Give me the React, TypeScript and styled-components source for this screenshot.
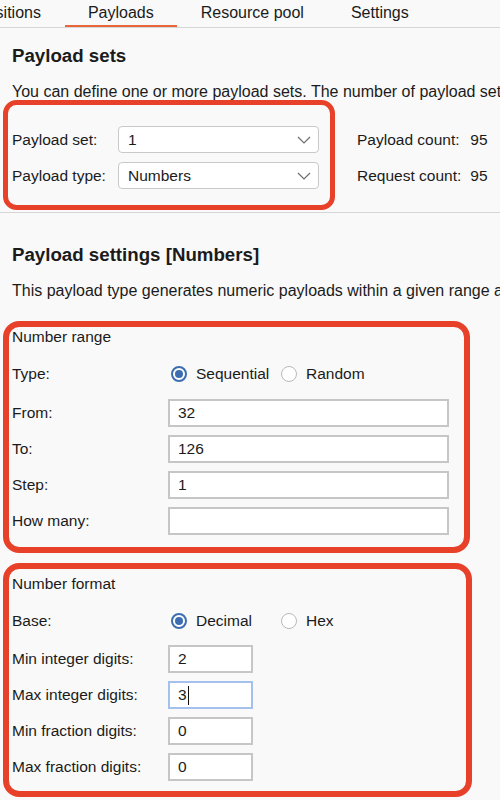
import React from "react";
import styled, { createGlobalStyle } from "styled-components";

const Global = createGlobalStyle`
  html, body { margin: 0; padding: 0; background: #f9f9f9; }
  body {
    font-family: "Liberation Sans", Arial, sans-serif;
    font-size: 15.5px;
    color: #1b1b1b;
    overflow: hidden;
  }
  * { box-sizing: border-box; }
`;

const Page = styled.div`
  width: 500px;
  height: 800px;
  overflow: hidden;
  background: #f9f9f9;
`;

const TabBar = styled.div`
  display: flex;
  gap: 1px;
  height: 28px;
  border-bottom: 1px solid #d6d6d6;
  margin-left: -47px;
  white-space: nowrap;
`;

const Tab = styled.div<{ $active?: boolean }>`
  height: 27px;
  line-height: 25px;
  padding: 0 23px;
  font-size: 16px;
  border-bottom: 2px solid ${(p) => (p.$active ? "#e8673a" : "transparent")};
`;

const Heading = styled.h2<{ $top: number }>`
  margin: ${(p) => p.$top}px 0 0 12px;
  font-size: 18.7px;
  font-weight: bold;
  line-height: 20px;
  white-space: nowrap;
`;

const Desc = styled.p<{ $top: number }>`
  margin: ${(p) => p.$top}px 0 0 12px;
  font-size: 16px;
  line-height: 16px;
  white-space: nowrap;
`;

const SetsRow = styled.div`
  display: flex;
  align-items: flex-start;
  gap: 22px;
`;

const Marked = styled.div<{ $w: number; $h: number; $border: number; $top: number; $pad: string }>`
  margin: ${(p) => p.$top}px 0 0 3px;
  width: ${(p) => p.$w}px;
  height: ${(p) => p.$h}px;
  border: ${(p) => p.$border}px solid #e8412a;
  border-radius: ${(p) => p.$border * 2.7}px;
  padding: ${(p) => p.$pad};
`;

const SelectGrid = styled.div`
  display: grid;
  grid-template-columns: 106px 201px;
  row-gap: 9px;
  align-items: center;
`;

const Select = styled.div`
  height: 27px;
  background: #fff;
  border: 1px solid #c9c9c9;
  border-radius: 4px;
  display: flex;
  align-items: center;
  justify-content: space-between;
  padding: 0 7px 0 9px;
`;

const Counts = styled.div`
  margin-top: 26px;
  display: grid;
  grid-template-columns: auto auto;
  column-gap: 9px;
  row-gap: 9px;
  grid-auto-rows: 27px;
  align-items: center;
  white-space: nowrap;
`;

const Divider = styled.div`
  margin-top: 2px;
  height: 1px;
  background: #d6d6d6;
`;

const GroupTitle = styled.div`
  line-height: 18px;
`;

const FormGrid = styled.div<{ $top: number; $first: number }>`
  margin-top: ${(p) => p.$top}px;
  display: grid;
  grid-template-columns: 156px auto;
  grid-template-rows: ${(p) => p.$first}px;
  grid-auto-rows: 28px;
  row-gap: 8px;
  align-items: center;
`;

const ChoiceLabel = styled.div<{ $h: number }>`
  align-self: start;
  height: ${(p) => p.$h}px;
  display: flex;
  align-items: center;
`;

const RadioRow = styled.div<{ $h: number }>`
  align-self: start;
  height: ${(p) => p.$h}px;
  display: flex;
  align-items: center;
  padding-left: 3px;
`;

const RadioOption = styled.label`
  width: 110px;
  display: flex;
  align-items: center;
  gap: 9px;
  white-space: nowrap;
`;

const RadioCircle = styled.span<{ $on?: boolean }>`
  width: 16px;
  height: 16px;
  border-radius: 50%;
  flex: none;
  background: #fff;
  border: ${(p) => (p.$on ? "2px solid #3c6db0" : "1px solid #b9b9b9")};
  display: flex;
  align-items: center;
  justify-content: center;
  &::after {
    content: "";
    display: ${(p) => (p.$on ? "block" : "none")};
    width: 8px;
    height: 8px;
    border-radius: 50%;
    background: #3c6db0;
  }
`;

const Field = styled.div<{ $w: number; $focus?: boolean }>`
  width: ${(p) => p.$w}px;
  height: 28px;
  background: #fff;
  border: 2px solid ${(p) => (p.$focus ? "#a3c1ec" : "#c6c6c6")};
  display: flex;
  align-items: center;
  padding-left: 8px;
`;

const Caret = styled.span`
  display: inline-block;
  width: 1px;
  height: 19px;
  background: #111;
  margin-left: 1px;
`;

const Chevron = () => (
  <svg width="14" height="8" viewBox="0 0 14 8">
    <path d="M1 1 L7 7 L13 1" fill="none" stroke="#6e6e6e" strokeWidth="1.2" />
  </svg>
);

const Radio = ({ on, label }: { on?: boolean; label: string }) => (
  <RadioOption>
    <RadioCircle $on={on} />
    {label}
  </RadioOption>
);

export default function App() {
  return (
    <Page>
      <Global />
      <TabBar>
        <Tab>Positions</Tab>
        <Tab $active>Payloads</Tab>
        <Tab>Resource pool</Tab>
        <Tab>Settings</Tab>
      </TabBar>

      <Heading $top={18}>Payload sets</Heading>
      <Desc $top={18}>
        You can define one or more payload sets. The number of payload sets depends on the attack type.
      </Desc>

      <SetsRow>
        <Marked $w={332} $h={110} $border={5} $top={0} $pad="21px 0 0 4px">
          <SelectGrid>
            <span>Payload set:</span>
            <Select>
              <span>1</span>
              <Chevron />
            </Select>
            <span>Payload type:</span>
            <Select>
              <span>Numbers</span>
              <Chevron />
            </Select>
          </SelectGrid>
        </Marked>
        <Counts>
          <span>Payload count:</span>
          <span>95</span>
          <span>Request count:</span>
          <span>95</span>
        </Counts>
      </SetsRow>
      <Divider />

      <Heading $top={32}>Payload settings [Numbers]</Heading>
      <Desc $top={18}>
        This payload type generates numeric payloads within a given range and in a specified format.
      </Desc>

      <Marked $w={467} $h={232} $border={6} $top={22} $pad="1px 0 0 3px">
        <GroupTitle>Number range</GroupTitle>
        <FormGrid $top={13} $first={32}>
          <ChoiceLabel $h={30}>Type:</ChoiceLabel>
          <RadioRow $h={30}>
            <Radio on label="Sequential" />
            <Radio label="Random" />
          </RadioRow>
          <span>From:</span>
          <Field $w={281}>32</Field>
          <span>To:</span>
          <Field $w={281}>126</Field>
          <span>Step:</span>
          <Field $w={281}>1</Field>
          <span>How many:</span>
          <Field $w={281} />
        </FormGrid>
      </Marked>

      <Marked $w={469} $h={234} $border={6} $top={10} $pad="6px 0 0 3px">
        <GroupTitle>Number format</GroupTitle>
        <FormGrid $top={14} $first={30}>
          <ChoiceLabel $h={27}>Base:</ChoiceLabel>
          <RadioRow $h={27}>
            <Radio on label="Decimal" />
            <Radio label="Hex" />
          </RadioRow>
          <span>Min integer digits:</span>
          <Field $w={85}>2</Field>
          <span>Max integer digits:</span>
          <Field $w={85} $focus>
            3<Caret />
          </Field>
          <span>Min fraction digits:</span>
          <Field $w={85}>0</Field>
          <span>Max fraction digits:</span>
          <Field $w={85}>0</Field>
        </FormGrid>
      </Marked>
    </Page>
  );
}
